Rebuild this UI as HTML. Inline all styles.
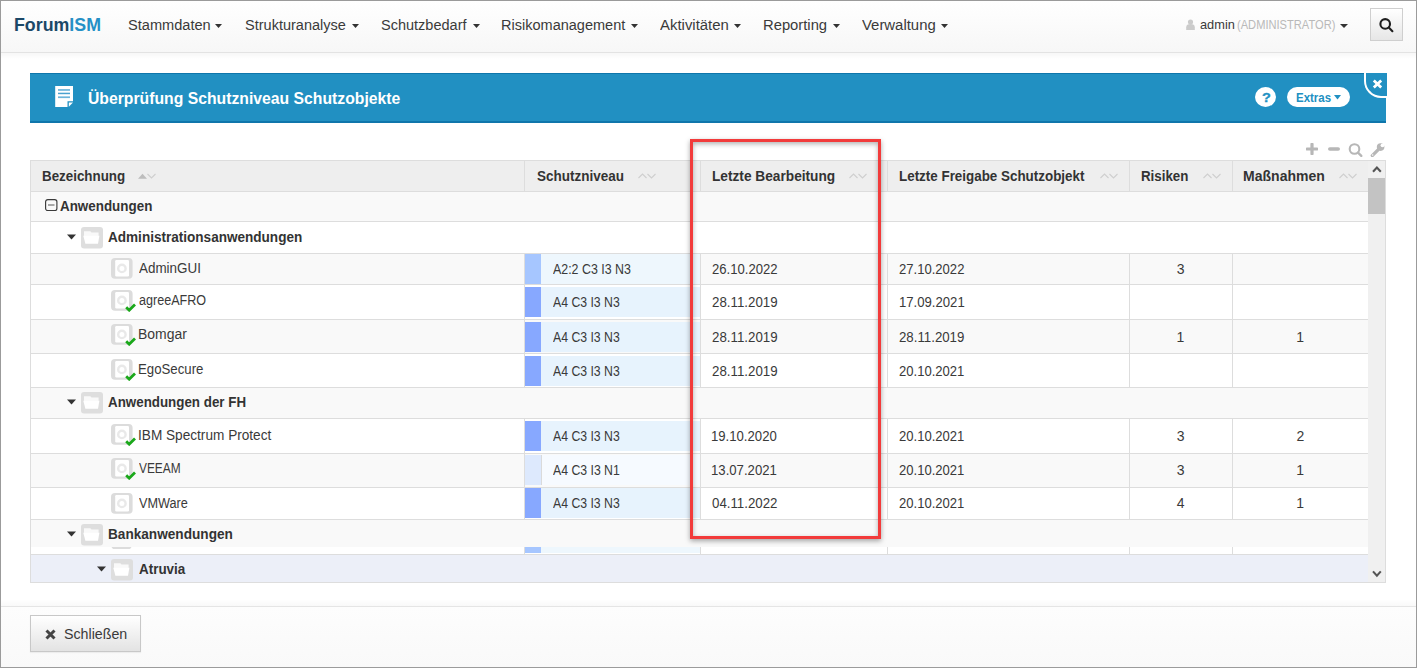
<!DOCTYPE html>
<html><head><meta charset="utf-8"><style>
html,body{margin:0;padding:0;width:1417px;height:668px;overflow:hidden;background:#fff}
.a{position:absolute;display:block}
.t{position:absolute;white-space:nowrap;font-family:"Liberation Sans",sans-serif;transform-origin:0 0}
</style></head><body>
<div class="a" style="left:0px;top:0px;width:1417px;height:668px;background:#ffffff"></div>
<div class="a" style="left:1px;top:1px;width:1415px;height:51px;background:linear-gradient(#ffffff,#f7f7f7);"></div>
<div class="a" style="left:1px;top:52px;width:1415px;height:1px;background:#e3e3e3"></div>
<div class="a" style="left:1px;top:53px;width:1415px;height:6px;background:linear-gradient(rgba(0,0,0,0.03),rgba(0,0,0,0))"></div>
<span class="t" style="left:13.84px;top:15.80px;font-size:18px;line-height:18px;font-weight:bold;color:#1b4867;transform:scaleX(0.9884);">Forum<span style="color:#2590c6">ISM</span></span>
<span class="t" style="left:127.64px;top:17.80px;font-size:14px;line-height:14px;font-weight:normal;color:#3a3a3a;transform:scaleX(1.0422);">Stammdaten</span>
<svg class="a" style="left:215px;top:24px;" width="7" height="4" viewBox="0 0 7 4"><path d="M0 0H7L3.5 4Z" fill="#333"/></svg>
<span class="t" style="left:245.05px;top:17.80px;font-size:14px;line-height:14px;font-weight:normal;color:#3a3a3a;transform:scaleX(1.0371);">Strukturanalyse</span>
<svg class="a" style="left:352px;top:24px;" width="7" height="4" viewBox="0 0 7 4"><path d="M0 0H7L3.5 4Z" fill="#333"/></svg>
<span class="t" style="left:381.25px;top:17.80px;font-size:14px;line-height:14px;font-weight:normal;color:#3a3a3a;transform:scaleX(1.0366);">Schutzbedarf</span>
<svg class="a" style="left:473px;top:24px;" width="7" height="4" viewBox="0 0 7 4"><path d="M0 0H7L3.5 4Z" fill="#333"/></svg>
<span class="t" style="left:500.84px;top:17.80px;font-size:14px;line-height:14px;font-weight:normal;color:#3a3a3a;transform:scaleX(1.0373);">Risikomanagement</span>
<svg class="a" style="left:631px;top:24px;" width="7" height="4" viewBox="0 0 7 4"><path d="M0 0H7L3.5 4Z" fill="#333"/></svg>
<span class="t" style="left:659.80px;top:17.80px;font-size:14px;line-height:14px;font-weight:normal;color:#3a3a3a;transform:scaleX(1.0659);">Aktivitäten</span>
<svg class="a" style="left:734px;top:24px;" width="7" height="4" viewBox="0 0 7 4"><path d="M0 0H7L3.5 4Z" fill="#333"/></svg>
<span class="t" style="left:762.82px;top:17.80px;font-size:14px;line-height:14px;font-weight:normal;color:#3a3a3a;transform:scaleX(1.0557);">Reporting</span>
<svg class="a" style="left:833px;top:24px;" width="7" height="4" viewBox="0 0 7 4"><path d="M0 0H7L3.5 4Z" fill="#333"/></svg>
<span class="t" style="left:861.73px;top:17.80px;font-size:14px;line-height:14px;font-weight:normal;color:#3a3a3a;transform:scaleX(1.0641);">Verwaltung</span>
<svg class="a" style="left:941px;top:24px;" width="7" height="4" viewBox="0 0 7 4"><path d="M0 0H7L3.5 4Z" fill="#333"/></svg>
<svg class="a" style="left:1186px;top:19px;" width="10" height="11" viewBox="0 0 10 11"><ellipse cx="4.5" cy="2.9" rx="2.6" ry="2.5" fill="#cbcbcb"/><path d="M0.2 10.9V8.2C0.2 5.9 1.8 5.1 4.5 5.1S8.8 5.9 8.8 8.2V10.9Z" fill="#cbcbcb"/></svg>
<span class="t" style="left:1200.29px;top:18.20px;font-size:13px;line-height:13px;font-weight:normal;color:#3a3a3a;transform:scaleX(0.9846);">admin</span>
<span class="t" style="left:1237.33px;top:18.20px;font-size:13px;line-height:13px;font-weight:normal;color:#b9b9b9;transform:scaleX(0.8547);">(ADMINISTRATOR)</span>
<svg class="a" style="left:1340px;top:24px;" width="8" height="4" viewBox="0 0 8 4"><path d="M0 0H8L4.0 4Z" fill="#333"/></svg>
<div class="a" style="left:1370px;top:8px;width:31px;height:31px;border:1px solid #cfcfcf;background:linear-gradient(#ffffff,#e6e6e6);box-sizing:content-box"></div>
<svg class="a" style="left:1379px;top:18px;" width="16" height="15" viewBox="0 0 16 15"><circle cx="6.2" cy="5.9" r="4.8" fill="none" stroke="#1e1e1e" stroke-width="2.1"/><path d="M9.8 9.6L13.4 13.2" stroke="#1e1e1e" stroke-width="2.1" stroke-linecap="round"/></svg>
<div class="a" style="left:30px;top:73px;width:1356px;height:50px;background:#2190c2;border-top:1px solid #0f76ab;border-bottom:2px solid #0f76ab;box-sizing:border-box"></div>
<svg class="a" style="left:55px;top:86px;" width="19" height="22" viewBox="0 0 19 22"><path d="M0.2 0H18V15.3H12.5V21H0.2Z" fill="#fff"/><path d="M13.8 16.6H18L13.8 20.8Z" fill="#fff"/><rect x="3" y="3.1" width="12" height="1.7" fill="#6db4da"/><rect x="3" y="6.7" width="12" height="1.5" fill="#4ba1cf"/><rect x="3" y="10.4" width="12" height="1.7" fill="#6db4da"/></svg>
<span class="t" style="left:88.16px;top:90.00px;font-size:17px;line-height:17px;font-weight:bold;color:#ffffff;transform:scaleX(0.9262);">Überprüfung Schutzniveau Schutzobjekte</span>
<svg class="a" style="left:1255px;top:87px;" width="21" height="20" viewBox="0 0 21 20"><ellipse cx="10.5" cy="10" rx="10.5" ry="10" fill="#fff"/></svg>
<span class="t" style="left:1261.75px;top:91.40px;font-size:13px;line-height:13px;font-weight:bold;color:#2190c2;transform:scaleX(1.1161);-webkit-text-stroke:0.3px #2190c2;">?</span>
<div class="a" style="left:1287px;top:87px;width:63px;height:20px;background:#fff;border-radius:10px"></div>
<span class="t" style="left:1295.96px;top:90.80px;font-size:13px;line-height:13px;font-weight:bold;color:#2190c2;transform:scaleX(0.8814);">Extras</span>
<svg class="a" style="left:1334px;top:95px;" width="7" height="4.5" viewBox="0 0 7 4.5"><path d="M0 0H7L3.5 4.5Z" fill="#2190c2"/></svg>
<div class="a" style="left:1364px;top:73px;width:23px;height:24.8px;background:#2190c2;border-left:2.2px solid #fff;border-bottom:2.2px solid #fff;border-bottom-left-radius:17px;box-sizing:border-box"></div>
<svg class="a" style="left:1372px;top:79px;" width="11" height="10" viewBox="0 0 11 10"><path d="M1.8 1.5L9.2 8.5M9.2 1.5L1.8 8.5" stroke="#fff" stroke-width="2.8"/></svg>
<svg class="a" style="left:1306px;top:143px;" width="12" height="12" viewBox="0 0 12 12"><path d="M6 1.2V10.8M1.2 6H10.8" stroke="#b7b7b7" stroke-width="3.2" stroke-linecap="round"/></svg>
<svg class="a" style="left:1328px;top:147px;" width="12" height="4" viewBox="0 0 12 4"><rect x="0" y="0.2" width="12" height="3.6" rx="1.8" fill="#b7b7b7"/></svg>
<svg class="a" style="left:1348px;top:142px;" width="15" height="15" viewBox="0 0 15 15"><circle cx="6.5" cy="7" r="4.8" fill="none" stroke="#b7b7b7" stroke-width="2.1"/><path d="M10 10.6L13.3 13.9" stroke="#b7b7b7" stroke-width="2.3" stroke-linecap="round"/></svg>
<svg class="a" style="left:1370px;top:142px;" width="15" height="15" viewBox="0 0 15 15"><path d="M2.3 13.6L8 7.9" stroke="#b7b7b7" stroke-width="3.3" stroke-linecap="round"/><circle cx="2.7" cy="12.9" r="0.75" fill="#fff"/><circle cx="10.6" cy="5.1" r="3.8" fill="#b7b7b7"/><circle cx="12.5" cy="3.3" r="1.9" fill="#fff"/></svg>
<div class="a" style="left:30px;top:160px;width:1356px;height:423px;border:1px solid #dddddd;box-sizing:border-box;background:#fff"></div>
<div class="a" style="left:31px;top:161px;width:1337px;height:30px;background:#eeeeee"></div>
<div class="a" style="left:31px;top:191px;width:1337px;height:1px;background:#dddddd"></div>
<div class="a" style="left:524px;top:161px;width:1px;height:30px;background:#dddddd"></div>
<div class="a" style="left:700px;top:161px;width:1px;height:30px;background:#dddddd"></div>
<div class="a" style="left:887px;top:161px;width:1px;height:30px;background:#dddddd"></div>
<div class="a" style="left:1129px;top:161px;width:1px;height:30px;background:#dddddd"></div>
<div class="a" style="left:1232px;top:161px;width:1px;height:30px;background:#dddddd"></div>
<span class="t" style="left:41.53px;top:168.80px;font-size:14px;line-height:14px;font-weight:bold;color:#333;transform:scaleX(0.9547);">Bezeichnung</span>
<svg class="a" style="left:138px;top:173px;" width="18" height="6" viewBox="0 0 18 6"><path d="M0 5.8L4.5 0.8L9 5.8Z" fill="#bdbdbd"/><path d="M9.5 1L13.5 5L17.5 1" fill="none" stroke="#cfcfcf" stroke-width="1.1"/></svg>
<span class="t" style="left:536.50px;top:168.80px;font-size:14px;line-height:14px;font-weight:bold;color:#333;transform:scaleX(0.9629);">Schutzniveau</span>
<svg class="a" style="left:638px;top:173px;" width="18" height="6" viewBox="0 0 18 6"><path d="M0.5 5L4.5 1L8.5 5" fill="none" stroke="#cfcfcf" stroke-width="1.1"/><path d="M9.5 1L13.5 5L17.5 1" fill="none" stroke="#cfcfcf" stroke-width="1.1"/></svg>
<span class="t" style="left:711.71px;top:168.80px;font-size:14px;line-height:14px;font-weight:bold;color:#333;transform:scaleX(0.9776);">Letzte Bearbeitung</span>
<svg class="a" style="left:849px;top:173px;" width="18" height="6" viewBox="0 0 18 6"><path d="M0.5 5L4.5 1L8.5 5" fill="none" stroke="#cfcfcf" stroke-width="1.1"/><path d="M9.5 1L13.5 5L17.5 1" fill="none" stroke="#cfcfcf" stroke-width="1.1"/></svg>
<span class="t" style="left:898.73px;top:168.80px;font-size:14px;line-height:14px;font-weight:bold;color:#333;transform:scaleX(0.9572);">Letzte Freigabe Schutzobjekt</span>
<svg class="a" style="left:1100px;top:173px;" width="18" height="6" viewBox="0 0 18 6"><path d="M0.5 5L4.5 1L8.5 5" fill="none" stroke="#cfcfcf" stroke-width="1.1"/><path d="M9.5 1L13.5 5L17.5 1" fill="none" stroke="#cfcfcf" stroke-width="1.1"/></svg>
<span class="t" style="left:1140.73px;top:168.80px;font-size:14px;line-height:14px;font-weight:bold;color:#333;transform:scaleX(0.9517);">Risiken</span>
<svg class="a" style="left:1203px;top:173px;" width="18" height="6" viewBox="0 0 18 6"><path d="M0.5 5L4.5 1L8.5 5" fill="none" stroke="#cfcfcf" stroke-width="1.1"/><path d="M9.5 1L13.5 5L17.5 1" fill="none" stroke="#cfcfcf" stroke-width="1.1"/></svg>
<span class="t" style="left:1243.09px;top:168.80px;font-size:14px;line-height:14px;font-weight:bold;color:#333;">Maßnahmen</span>
<svg class="a" style="left:1339px;top:173px;" width="18" height="6" viewBox="0 0 18 6"><path d="M0.5 5L4.5 1L8.5 5" fill="none" stroke="#cfcfcf" stroke-width="1.1"/><path d="M9.5 1L13.5 5L17.5 1" fill="none" stroke="#cfcfcf" stroke-width="1.1"/></svg>
<div class="a" style="left:31px;top:192px;width:1337px;height:29px;background:#f9f9f9"></div>
<div class="a" style="left:31px;top:221px;width:1337px;height:1px;background:#dddddd"></div>
<div class="a" style="left:31px;top:222px;width:1337px;height:31px;background:#ffffff"></div>
<div class="a" style="left:31px;top:253px;width:1337px;height:1px;background:#dddddd"></div>
<div class="a" style="left:31px;top:254px;width:1337px;height:30px;background:#f9f9f9"></div>
<div class="a" style="left:31px;top:284px;width:1337px;height:1px;background:#dddddd"></div>
<div class="a" style="left:524px;top:254px;width:1px;height:30px;background:#dddddd"></div>
<div class="a" style="left:700px;top:254px;width:1px;height:30px;background:#dddddd"></div>
<div class="a" style="left:887px;top:254px;width:1px;height:30px;background:#dddddd"></div>
<div class="a" style="left:1129px;top:254px;width:1px;height:30px;background:#dddddd"></div>
<div class="a" style="left:1232px;top:254px;width:1px;height:30px;background:#dddddd"></div>
<div class="a" style="left:31px;top:285px;width:1337px;height:34px;background:#ffffff"></div>
<div class="a" style="left:31px;top:319px;width:1337px;height:1px;background:#dddddd"></div>
<div class="a" style="left:524px;top:285px;width:1px;height:34px;background:#dddddd"></div>
<div class="a" style="left:700px;top:285px;width:1px;height:34px;background:#dddddd"></div>
<div class="a" style="left:887px;top:285px;width:1px;height:34px;background:#dddddd"></div>
<div class="a" style="left:1129px;top:285px;width:1px;height:34px;background:#dddddd"></div>
<div class="a" style="left:1232px;top:285px;width:1px;height:34px;background:#dddddd"></div>
<div class="a" style="left:31px;top:320px;width:1337px;height:33px;background:#f9f9f9"></div>
<div class="a" style="left:31px;top:353px;width:1337px;height:1px;background:#dddddd"></div>
<div class="a" style="left:524px;top:320px;width:1px;height:33px;background:#dddddd"></div>
<div class="a" style="left:700px;top:320px;width:1px;height:33px;background:#dddddd"></div>
<div class="a" style="left:887px;top:320px;width:1px;height:33px;background:#dddddd"></div>
<div class="a" style="left:1129px;top:320px;width:1px;height:33px;background:#dddddd"></div>
<div class="a" style="left:1232px;top:320px;width:1px;height:33px;background:#dddddd"></div>
<div class="a" style="left:31px;top:354px;width:1337px;height:33px;background:#ffffff"></div>
<div class="a" style="left:31px;top:387px;width:1337px;height:1px;background:#dddddd"></div>
<div class="a" style="left:524px;top:354px;width:1px;height:33px;background:#dddddd"></div>
<div class="a" style="left:700px;top:354px;width:1px;height:33px;background:#dddddd"></div>
<div class="a" style="left:887px;top:354px;width:1px;height:33px;background:#dddddd"></div>
<div class="a" style="left:1129px;top:354px;width:1px;height:33px;background:#dddddd"></div>
<div class="a" style="left:1232px;top:354px;width:1px;height:33px;background:#dddddd"></div>
<div class="a" style="left:31px;top:388px;width:1337px;height:30px;background:#f9f9f9"></div>
<div class="a" style="left:31px;top:418px;width:1337px;height:1px;background:#dddddd"></div>
<div class="a" style="left:31px;top:419px;width:1337px;height:34px;background:#ffffff"></div>
<div class="a" style="left:31px;top:453px;width:1337px;height:1px;background:#dddddd"></div>
<div class="a" style="left:524px;top:419px;width:1px;height:34px;background:#dddddd"></div>
<div class="a" style="left:700px;top:419px;width:1px;height:34px;background:#dddddd"></div>
<div class="a" style="left:887px;top:419px;width:1px;height:34px;background:#dddddd"></div>
<div class="a" style="left:1129px;top:419px;width:1px;height:34px;background:#dddddd"></div>
<div class="a" style="left:1232px;top:419px;width:1px;height:34px;background:#dddddd"></div>
<div class="a" style="left:31px;top:454px;width:1337px;height:33px;background:#f9f9f9"></div>
<div class="a" style="left:31px;top:487px;width:1337px;height:1px;background:#dddddd"></div>
<div class="a" style="left:524px;top:454px;width:1px;height:33px;background:#dddddd"></div>
<div class="a" style="left:700px;top:454px;width:1px;height:33px;background:#dddddd"></div>
<div class="a" style="left:887px;top:454px;width:1px;height:33px;background:#dddddd"></div>
<div class="a" style="left:1129px;top:454px;width:1px;height:33px;background:#dddddd"></div>
<div class="a" style="left:1232px;top:454px;width:1px;height:33px;background:#dddddd"></div>
<div class="a" style="left:31px;top:488px;width:1337px;height:31px;background:#ffffff"></div>
<div class="a" style="left:31px;top:519px;width:1337px;height:1px;background:#dddddd"></div>
<div class="a" style="left:524px;top:488px;width:1px;height:31px;background:#dddddd"></div>
<div class="a" style="left:700px;top:488px;width:1px;height:31px;background:#dddddd"></div>
<div class="a" style="left:887px;top:488px;width:1px;height:31px;background:#dddddd"></div>
<div class="a" style="left:1129px;top:488px;width:1px;height:31px;background:#dddddd"></div>
<div class="a" style="left:1232px;top:488px;width:1px;height:31px;background:#dddddd"></div>
<div class="a" style="left:31px;top:520px;width:1337px;height:34px;background:#ffffff"></div>
<div class="a" style="left:524px;top:547px;width:1px;height:7px;background:#dddddd"></div>
<div class="a" style="left:700px;top:547px;width:1px;height:7px;background:#dddddd"></div>
<div class="a" style="left:887px;top:547px;width:1px;height:7px;background:#dddddd"></div>
<div class="a" style="left:1129px;top:547px;width:1px;height:7px;background:#dddddd"></div>
<div class="a" style="left:1232px;top:547px;width:1px;height:7px;background:#dddddd"></div>
<div class="a" style="left:31px;top:520px;width:1337px;height:27px;background:#f9f9f9"></div>
<div class="a" style="left:31px;top:554px;width:1337px;height:1px;background:#dddddd"></div>
<div class="a" style="left:31px;top:555px;width:1337px;height:27px;background:#eceff8"></div>
<div class="a" style="left:1368px;top:161px;width:17px;height:421px;background:#f0f0f0"></div>
<div class="a" style="left:1368px;top:178px;width:17px;height:36px;background:#c3c3c3"></div>
<svg class="a" style="left:1371.5px;top:164.5px;" width="10" height="8" viewBox="0 0 10 8"><path d="M1 6.8L4.9 2.6L8.8 6.8" fill="none" stroke="#555" stroke-width="2.1"/></svg>
<svg class="a" style="left:1371.5px;top:570px;" width="10" height="8" viewBox="0 0 10 8"><path d="M1 1.4L4.9 5.6L8.8 1.4" fill="none" stroke="#555" stroke-width="2.1"/></svg>
<svg class="a" style="left:45px;top:199px;" width="13" height="12" viewBox="0 0 13 12"><rect x="0.6" y="0.6" width="11.3" height="11" rx="2.2" fill="none" stroke="#3a3a3a" stroke-width="1.15"/><path d="M3 6H9.5" stroke="#666" stroke-width="1.1"/></svg>
<span class="t" style="left:60.36px;top:198.60px;font-size:14px;line-height:14px;font-weight:bold;color:#333;transform:scaleX(0.9573);">Anwendungen</span>
<svg class="a" style="left:67px;top:234px;" width="9" height="6" viewBox="0 0 9 6"><path d="M0 0.5H9L4.5 5.5Z" fill="#333"/></svg>
<svg class="a" style="left:81px;top:226.5px;" width="22" height="22" viewBox="0 0 22 22"><rect x="0" y="0" width="22" height="21.5" rx="3" fill="#dedede"/><path d="M3 4.3H9.3L10.5 5.6H17.6V9H3Z" fill="#f9f9f9"/><path d="M2.3 8.8H18.4L17 16.8H4.4Z" fill="#fff"/></svg>
<span class="t" style="left:108.16px;top:229.90px;font-size:14px;line-height:14px;font-weight:bold;color:#333;transform:scaleX(0.9679);">Administrationsanwendungen</span>
<svg class="a" style="left:67px;top:399px;" width="9" height="6" viewBox="0 0 9 6"><path d="M0 0.5H9L4.5 5.5Z" fill="#333"/></svg>
<svg class="a" style="left:81px;top:391.5px;" width="22" height="22" viewBox="0 0 22 22"><rect x="0" y="0" width="22" height="21.5" rx="3" fill="#dedede"/><path d="M3 4.3H9.3L10.5 5.6H17.6V9H3Z" fill="#f9f9f9"/><path d="M2.3 8.8H18.4L17 16.8H4.4Z" fill="#fff"/></svg>
<span class="t" style="left:107.87px;top:394.80px;font-size:14px;line-height:14px;font-weight:bold;color:#333;transform:scaleX(0.9542);">Anwendungen der FH</span>
<svg class="a" style="left:111px;top:258px;" width="22" height="21" viewBox="0 0 22 21"><rect x="0" y="0" width="21.6" height="20.8" rx="4" fill="#dcdcdc"/><rect x="4.2" y="2.1" width="13.8" height="16.3" rx="1.2" fill="#fff"/><circle cx="10.9" cy="10.4" r="3.7" fill="none" stroke="#e9e9e9" stroke-width="2.4"/></svg>
<span class="t" style="left:139.20px;top:261.00px;font-size:14px;line-height:14px;font-weight:normal;color:#3a3a3a;transform:scaleX(0.9592);">AdminGUI</span>
<div class="a" style="left:525px;top:254px;width:16px;height:30px;background:#a6c6ff"></div>
<div class="a" style="left:541px;top:254px;width:159px;height:30px;background:#eef7fd"></div>
<span class="t" style="left:553.00px;top:261.70px;font-size:14px;line-height:14px;font-weight:normal;color:#3a3a3a;transform:scaleX(0.8860);">A2:2 C3 I3 N3</span>
<span class="t" style="left:711.64px;top:261.70px;font-size:14px;line-height:14px;font-weight:normal;color:#3a3a3a;transform:scaleX(0.9364);">26.10.2022</span>
<span class="t" style="left:898.85px;top:261.70px;font-size:14px;line-height:14px;font-weight:normal;color:#3a3a3a;transform:scaleX(0.9334);">27.10.2022</span>
<span class="t" style="left:1176.75px;top:261.70px;font-size:14px;line-height:14px;font-weight:normal;color:#3a3a3a;">3</span>
<svg class="a" style="left:111px;top:290px;" width="22" height="21" viewBox="0 0 22 21"><rect x="0" y="0" width="21.6" height="20.8" rx="4" fill="#dcdcdc"/><rect x="4.2" y="2.1" width="13.8" height="16.3" rx="1.2" fill="#fff"/><circle cx="10.9" cy="10.4" r="3.7" fill="none" stroke="#e9e9e9" stroke-width="2.4"/></svg>
<svg class="a" style="left:125px;top:303px;" width="11" height="9" viewBox="0 0 11 9"><path d="M1.2 4.2L4.2 7.2L10 1.6" fill="none" stroke="#1aa81a" stroke-width="2.8"/></svg>
<span class="t" style="left:138.70px;top:292.60px;font-size:14px;line-height:14px;font-weight:normal;color:#3a3a3a;transform:scaleX(0.8980);">agreeAFRO</span>
<div class="a" style="left:525px;top:287px;width:16px;height:30px;background:#87a8ff"></div>
<div class="a" style="left:541px;top:287px;width:159px;height:30px;background:#e7f3fd"></div>
<span class="t" style="left:553.00px;top:294.70px;font-size:14px;line-height:14px;font-weight:normal;color:#3a3a3a;transform:scaleX(0.8749);">A4 C3 I3 N3</span>
<span class="t" style="left:711.64px;top:294.70px;font-size:14px;line-height:14px;font-weight:normal;color:#3a3a3a;transform:scaleX(0.9499);">28.11.2019</span>
<span class="t" style="left:898.52px;top:294.70px;font-size:14px;line-height:14px;font-weight:normal;color:#3a3a3a;transform:scaleX(0.9373);">17.09.2021</span>
<svg class="a" style="left:111px;top:324px;" width="22" height="21" viewBox="0 0 22 21"><rect x="0" y="0" width="21.6" height="20.8" rx="4" fill="#dcdcdc"/><rect x="4.2" y="2.1" width="13.8" height="16.3" rx="1.2" fill="#fff"/><circle cx="10.9" cy="10.4" r="3.7" fill="none" stroke="#e9e9e9" stroke-width="2.4"/></svg>
<svg class="a" style="left:125px;top:337px;" width="11" height="9" viewBox="0 0 11 9"><path d="M1.2 4.2L4.2 7.2L10 1.6" fill="none" stroke="#1aa81a" stroke-width="2.8"/></svg>
<span class="t" style="left:138.08px;top:327.20px;font-size:14px;line-height:14px;font-weight:normal;color:#3a3a3a;transform:scaleX(0.9971);">Bomgar</span>
<div class="a" style="left:525px;top:322px;width:16px;height:30px;background:#87a8ff"></div>
<div class="a" style="left:541px;top:322px;width:159px;height:30px;background:#e7f3fd"></div>
<span class="t" style="left:553.00px;top:329.70px;font-size:14px;line-height:14px;font-weight:normal;color:#3a3a3a;transform:scaleX(0.8749);">A4 C3 I3 N3</span>
<span class="t" style="left:711.64px;top:329.70px;font-size:14px;line-height:14px;font-weight:normal;color:#3a3a3a;transform:scaleX(0.9499);">28.11.2019</span>
<span class="t" style="left:898.84px;top:329.70px;font-size:14px;line-height:14px;font-weight:normal;color:#3a3a3a;transform:scaleX(0.9470);">28.11.2019</span>
<span class="t" style="left:1176.50px;top:329.70px;font-size:14px;line-height:14px;font-weight:normal;color:#3a3a3a;">1</span>
<span class="t" style="left:1296.31px;top:329.70px;font-size:14px;line-height:14px;font-weight:normal;color:#3a3a3a;">1</span>
<svg class="a" style="left:111px;top:359px;" width="22" height="21" viewBox="0 0 22 21"><rect x="0" y="0" width="21.6" height="20.8" rx="4" fill="#dcdcdc"/><rect x="4.2" y="2.1" width="13.8" height="16.3" rx="1.2" fill="#fff"/><circle cx="10.9" cy="10.4" r="3.7" fill="none" stroke="#e9e9e9" stroke-width="2.4"/></svg>
<svg class="a" style="left:125px;top:372px;" width="11" height="9" viewBox="0 0 11 9"><path d="M1.2 4.2L4.2 7.2L10 1.6" fill="none" stroke="#1aa81a" stroke-width="2.8"/></svg>
<span class="t" style="left:138.14px;top:361.60px;font-size:14px;line-height:14px;font-weight:normal;color:#3a3a3a;transform:scaleX(0.9445);">EgoSecure</span>
<div class="a" style="left:525px;top:356px;width:16px;height:30px;background:#87a8ff"></div>
<div class="a" style="left:541px;top:356px;width:159px;height:30px;background:#e7f3fd"></div>
<span class="t" style="left:553.00px;top:363.70px;font-size:14px;line-height:14px;font-weight:normal;color:#3a3a3a;transform:scaleX(0.8749);">A4 C3 I3 N3</span>
<span class="t" style="left:711.64px;top:363.70px;font-size:14px;line-height:14px;font-weight:normal;color:#3a3a3a;transform:scaleX(0.9499);">28.11.2019</span>
<span class="t" style="left:898.85px;top:363.70px;font-size:14px;line-height:14px;font-weight:normal;color:#3a3a3a;transform:scaleX(0.9325);">20.10.2021</span>
<svg class="a" style="left:111px;top:424px;" width="22" height="21" viewBox="0 0 22 21"><rect x="0" y="0" width="21.6" height="20.8" rx="4" fill="#dcdcdc"/><rect x="4.2" y="2.1" width="13.8" height="16.3" rx="1.2" fill="#fff"/><circle cx="10.9" cy="10.4" r="3.7" fill="none" stroke="#e9e9e9" stroke-width="2.4"/></svg>
<svg class="a" style="left:125px;top:437px;" width="11" height="9" viewBox="0 0 11 9"><path d="M1.2 4.2L4.2 7.2L10 1.6" fill="none" stroke="#1aa81a" stroke-width="2.8"/></svg>
<span class="t" style="left:137.97px;top:427.50px;font-size:14px;line-height:14px;font-weight:normal;color:#3a3a3a;transform:scaleX(0.9735);">IBM Spectrum Protect</span>
<div class="a" style="left:525px;top:421px;width:16px;height:30px;background:#87a8ff"></div>
<div class="a" style="left:541px;top:421px;width:159px;height:30px;background:#e7f3fd"></div>
<span class="t" style="left:553.00px;top:428.70px;font-size:14px;line-height:14px;font-weight:normal;color:#3a3a3a;transform:scaleX(0.8749);">A4 C3 I3 N3</span>
<span class="t" style="left:711.31px;top:428.70px;font-size:14px;line-height:14px;font-weight:normal;color:#3a3a3a;transform:scaleX(0.9383);">19.10.2020</span>
<span class="t" style="left:898.85px;top:428.70px;font-size:14px;line-height:14px;font-weight:normal;color:#3a3a3a;transform:scaleX(0.9325);">20.10.2021</span>
<span class="t" style="left:1176.75px;top:428.70px;font-size:14px;line-height:14px;font-weight:normal;color:#3a3a3a;">3</span>
<span class="t" style="left:1296.52px;top:428.70px;font-size:14px;line-height:14px;font-weight:normal;color:#3a3a3a;">2</span>
<svg class="a" style="left:111px;top:458px;" width="22" height="21" viewBox="0 0 22 21"><rect x="0" y="0" width="21.6" height="20.8" rx="4" fill="#dcdcdc"/><rect x="4.2" y="2.1" width="13.8" height="16.3" rx="1.2" fill="#fff"/><circle cx="10.9" cy="10.4" r="3.7" fill="none" stroke="#e9e9e9" stroke-width="2.4"/></svg>
<svg class="a" style="left:125px;top:471px;" width="11" height="9" viewBox="0 0 11 9"><path d="M1.2 4.2L4.2 7.2L10 1.6" fill="none" stroke="#1aa81a" stroke-width="2.8"/></svg>
<span class="t" style="left:139.14px;top:460.90px;font-size:14px;line-height:14px;font-weight:normal;color:#3a3a3a;transform:scaleX(0.8492);">VEEAM</span>
<div class="a" style="left:525px;top:455px;width:16px;height:30px;background:#dde9fd"></div>
<div class="a" style="left:541px;top:455px;width:159px;height:30px;background:#f6faff"></div>
<div class="a" style="left:541px;top:455px;width:1px;height:30px;background:#dadada"></div>
<span class="t" style="left:553.00px;top:462.70px;font-size:14px;line-height:14px;font-weight:normal;color:#3a3a3a;transform:scaleX(0.8757);">A4 C3 I3 N1</span>
<span class="t" style="left:711.31px;top:462.70px;font-size:14px;line-height:14px;font-weight:normal;color:#3a3a3a;transform:scaleX(0.9402);">13.07.2021</span>
<span class="t" style="left:898.85px;top:462.70px;font-size:14px;line-height:14px;font-weight:normal;color:#3a3a3a;transform:scaleX(0.9325);">20.10.2021</span>
<span class="t" style="left:1176.75px;top:462.70px;font-size:14px;line-height:14px;font-weight:normal;color:#3a3a3a;">3</span>
<span class="t" style="left:1296.31px;top:462.70px;font-size:14px;line-height:14px;font-weight:normal;color:#3a3a3a;">1</span>
<svg class="a" style="left:111px;top:493px;" width="22" height="21" viewBox="0 0 22 21"><rect x="0" y="0" width="21.6" height="20.8" rx="4" fill="#dcdcdc"/><rect x="4.2" y="2.1" width="13.8" height="16.3" rx="1.2" fill="#fff"/><circle cx="10.9" cy="10.4" r="3.7" fill="none" stroke="#e9e9e9" stroke-width="2.4"/></svg>
<span class="t" style="left:139.14px;top:496.00px;font-size:14px;line-height:14px;font-weight:normal;color:#3a3a3a;transform:scaleX(0.9067);">VMWare</span>
<div class="a" style="left:525px;top:488px;width:16px;height:30px;background:#87a8ff"></div>
<div class="a" style="left:541px;top:488px;width:159px;height:30px;background:#e7f3fd"></div>
<span class="t" style="left:553.00px;top:495.70px;font-size:14px;line-height:14px;font-weight:normal;color:#3a3a3a;transform:scaleX(0.8749);">A4 C3 I3 N3</span>
<span class="t" style="left:711.77px;top:495.70px;font-size:14px;line-height:14px;font-weight:normal;color:#3a3a3a;transform:scaleX(0.9489);">04.11.2022</span>
<span class="t" style="left:898.85px;top:495.70px;font-size:14px;line-height:14px;font-weight:normal;color:#3a3a3a;transform:scaleX(0.9325);">20.10.2021</span>
<span class="t" style="left:1176.75px;top:495.70px;font-size:14px;line-height:14px;font-weight:normal;color:#3a3a3a;">4</span>
<span class="t" style="left:1296.31px;top:495.70px;font-size:14px;line-height:14px;font-weight:normal;color:#3a3a3a;">1</span>
<svg class="a" style="left:111px;top:540px;" width="21" height="9" viewBox="0 0 21 9"><rect x="1.5" y="-10" width="18" height="18" rx="3" fill="#fff" stroke="#dcdcdc" stroke-width="3"/></svg>
<div class="a" style="left:525px;top:547px;width:16px;height:6px;background:#a6c6ff"></div>
<div class="a" style="left:541px;top:547px;width:159px;height:6px;background:#eef7fd"></div>
<div class="a" style="left:31px;top:520px;width:1337px;height:27px;background:#f9f9f9"></div>
<svg class="a" style="left:67px;top:531px;" width="9" height="6" viewBox="0 0 9 6"><path d="M0 0.5H9L4.5 5.5Z" fill="#333"/></svg>
<svg class="a" style="left:81px;top:523.5px;" width="22" height="22" viewBox="0 0 22 22"><rect x="0" y="0" width="22" height="21.5" rx="3" fill="#dedede"/><path d="M3 4.3H9.3L10.5 5.6H17.6V9H3Z" fill="#f9f9f9"/><path d="M2.3 8.8H18.4L17 16.8H4.4Z" fill="#fff"/></svg>
<span class="t" style="left:107.91px;top:527.00px;font-size:14px;line-height:14px;font-weight:bold;color:#333;transform:scaleX(0.9727);">Bankanwendungen</span>
<svg class="a" style="left:97px;top:566px;" width="9" height="6" viewBox="0 0 9 6"><path d="M0 0.5H9L4.5 5.5Z" fill="#333"/></svg>
<svg class="a" style="left:111px;top:558.5px;" width="22" height="22" viewBox="0 0 22 22"><rect x="0" y="0" width="22" height="21.5" rx="3" fill="#dedede"/><path d="M3 4.3H9.3L10.5 5.6H17.6V9H3Z" fill="#f9f9f9"/><path d="M2.3 8.8H18.4L17 16.8H4.4Z" fill="#fff"/></svg>
<span class="t" style="left:138.96px;top:562.00px;font-size:14px;line-height:14px;font-weight:bold;color:#333;transform:scaleX(0.9600);">Atruvia</span>
<div class="a" style="left:690px;top:139px;width:191px;height:400px;border:3px solid #f23b3b;box-sizing:border-box;box-shadow:0 2px 5px rgba(0,0,0,0.35), inset 0 2px 5px rgba(0,0,0,0.3)"></div>
<div class="a" style="left:1px;top:599px;width:1415px;height:7px;background:linear-gradient(rgba(0,0,0,0),rgba(0,0,0,0.025))"></div>
<div class="a" style="left:1px;top:606px;width:1415px;height:1px;background:#e5e5e5"></div>
<div class="a" style="left:1px;top:607px;width:1415px;height:60px;background:linear-gradient(#fdfdfd,#f9f9f9)"></div>
<div class="a" style="left:30px;top:615px;width:111px;height:37px;border:1px solid #c8c8c8;background:linear-gradient(#ffffff,#e3e3e3);box-sizing:border-box;box-shadow:0 1px 1px rgba(0,0,0,0.05)"></div>
<svg class="a" style="left:44.5px;top:628.5px;" width="11" height="11" viewBox="0 0 11 11"><path d="M1.5 1.5L9.5 9.5M9.5 1.5L1.5 9.5" stroke="#444" stroke-width="3"/></svg>
<span class="t" style="left:63.66px;top:627.00px;font-size:14px;line-height:14px;font-weight:normal;color:#3a3a3a;transform:scaleX(1.0155);">Schließen</span>
<div class="a" style="left:0px;top:0px;width:1417px;height:668px;border:1px solid #9b9b9b;box-sizing:border-box;background:transparent"></div>
</body></html>
